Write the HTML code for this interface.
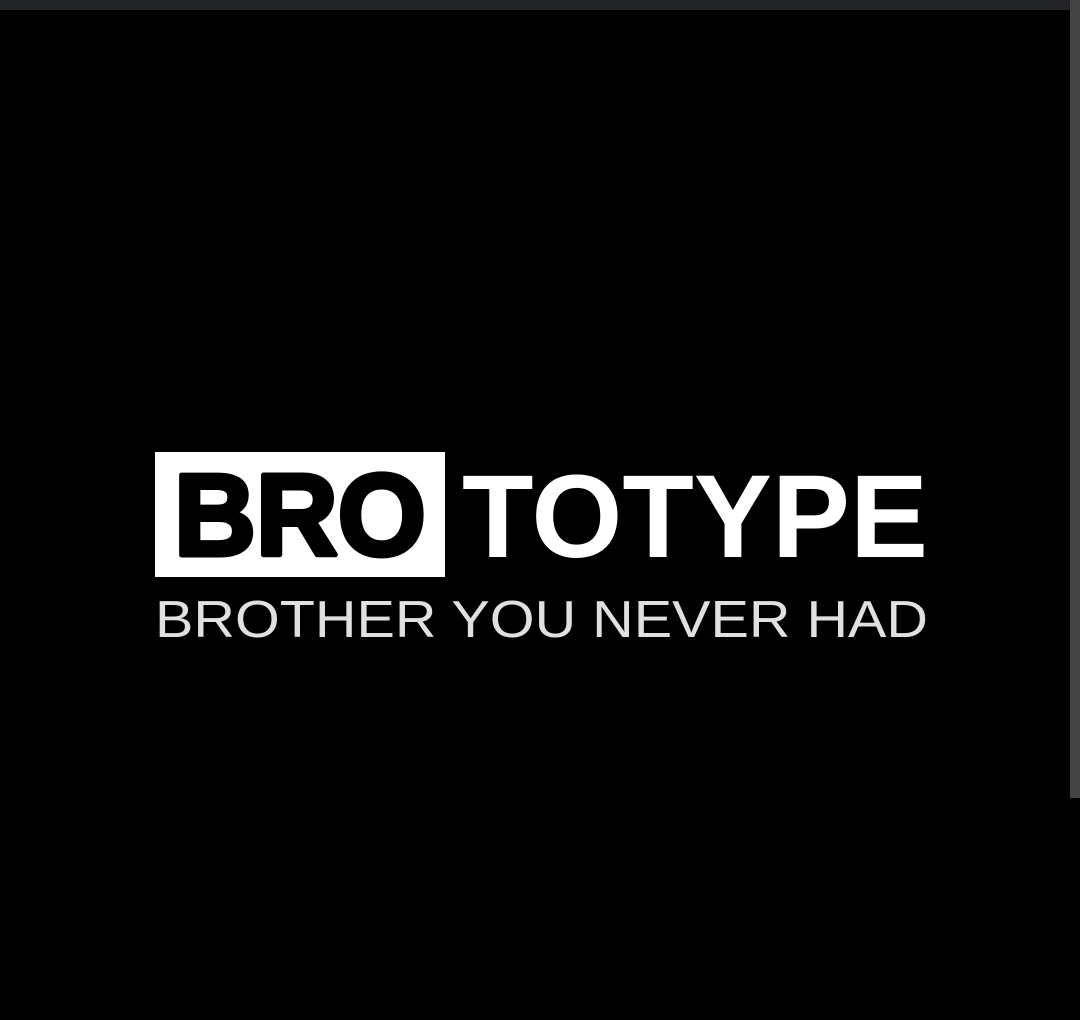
<!DOCTYPE html>
<html><head><style>
html,body{margin:0;padding:0;background:#000;width:1080px;height:1020px;overflow:hidden}
</style></head><body>
<svg width="1080" height="1020" xmlns="http://www.w3.org/2000/svg" style="display:block">
<rect width="1080" height="1020" fill="#000"/>
<rect x="0" y="0" width="1080" height="10" fill="#232428"/>
<rect x="1070" y="0" width="10" height="798" fill="#444"/>
<rect x="155" y="452" width="290" height="125" fill="#fff"/>
<text x="174" y="555" font-family="Liberation Sans, sans-serif" font-weight="bold" font-size="116" fill="#000" stroke="#000" stroke-width="5" stroke-linejoin="round" textLength="252" lengthAdjust="spacingAndGlyphs">BRO</text>
<text x="462" y="557" font-family="Liberation Sans, sans-serif" font-weight="bold" font-size="118" fill="#fff" textLength="466" lengthAdjust="spacingAndGlyphs">TOTYPE</text>
<text x="155" y="637" font-family="Liberation Sans, sans-serif" font-size="52" fill="#e0e0e0" textLength="773" lengthAdjust="spacingAndGlyphs">BROTHER YOU NEVER HAD</text>
</svg>
</body></html>
